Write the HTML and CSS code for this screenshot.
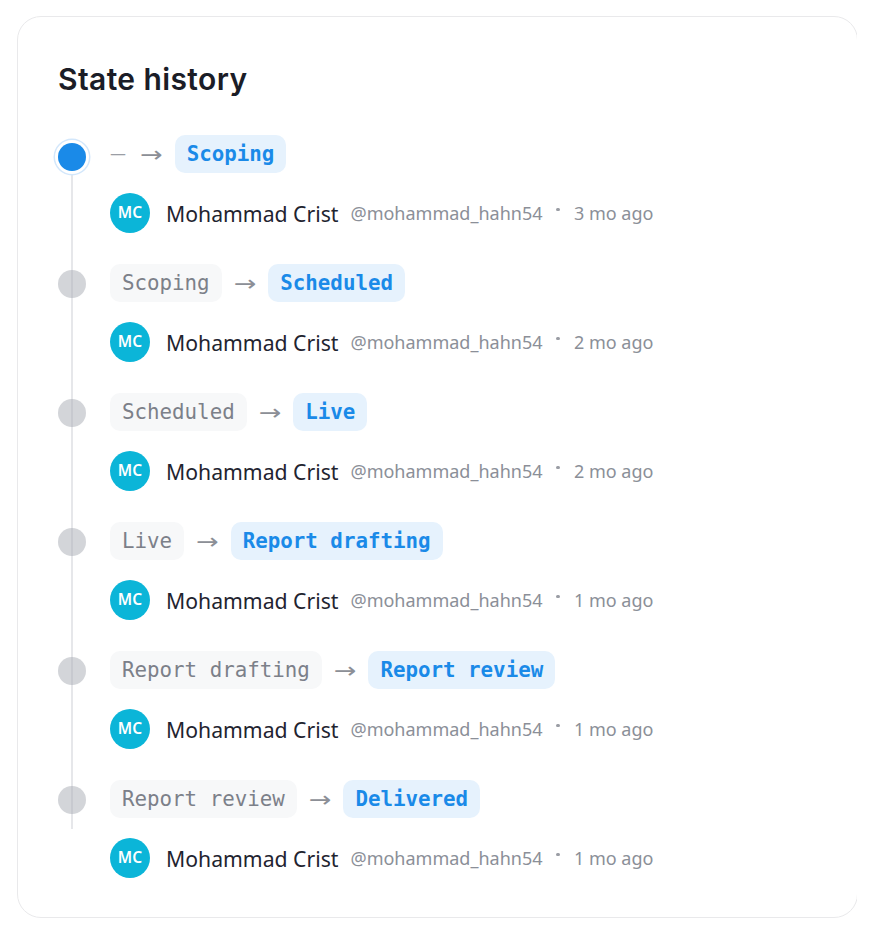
FILE: index.html
```html
<!DOCTYPE html>
<html lang="en">
<head>
<meta charset="utf-8">
<title>State history</title>
<link rel="stylesheet" href="styles.css">
</head>
<body>
<section class="card">
  <h2 class="title">State history</h2>
  <ol class="timeline">
    <li class="item">
      <span class="dot dot-current"></span>
      <div class="body">
        <div class="change">
          <span class="none">—</span>
          <span class="arrow">→</span>
          <span class="pill pill-new">Scoping</span>
        </div>
        <div class="meta">
          <span class="avatar">MC</span>
          <span class="name">Mohammad Crist</span>
          <span class="handle">@mohammad_hahn54</span>
          <span class="sep"></span>
          <span class="time">3 mo ago</span>
        </div>
      </div>
    </li>
    <li class="item">
      <span class="dot"></span>
      <div class="body">
        <div class="change">
          <span class="pill pill-old">Scoping</span>
          <span class="arrow">→</span>
          <span class="pill pill-new">Scheduled</span>
        </div>
        <div class="meta">
          <span class="avatar">MC</span>
          <span class="name">Mohammad Crist</span>
          <span class="handle">@mohammad_hahn54</span>
          <span class="sep"></span>
          <span class="time">2 mo ago</span>
        </div>
      </div>
    </li>
    <li class="item">
      <span class="dot"></span>
      <div class="body">
        <div class="change">
          <span class="pill pill-old">Scheduled</span>
          <span class="arrow">→</span>
          <span class="pill pill-new">Live</span>
        </div>
        <div class="meta">
          <span class="avatar">MC</span>
          <span class="name">Mohammad Crist</span>
          <span class="handle">@mohammad_hahn54</span>
          <span class="sep"></span>
          <span class="time">2 mo ago</span>
        </div>
      </div>
    </li>
    <li class="item">
      <span class="dot"></span>
      <div class="body">
        <div class="change">
          <span class="pill pill-old">Live</span>
          <span class="arrow">→</span>
          <span class="pill pill-new">Report drafting</span>
        </div>
        <div class="meta">
          <span class="avatar">MC</span>
          <span class="name">Mohammad Crist</span>
          <span class="handle">@mohammad_hahn54</span>
          <span class="sep"></span>
          <span class="time">1 mo ago</span>
        </div>
      </div>
    </li>
    <li class="item">
      <span class="dot"></span>
      <div class="body">
        <div class="change">
          <span class="pill pill-old">Report drafting</span>
          <span class="arrow">→</span>
          <span class="pill pill-new">Report review</span>
        </div>
        <div class="meta">
          <span class="avatar">MC</span>
          <span class="name">Mohammad Crist</span>
          <span class="handle">@mohammad_hahn54</span>
          <span class="sep"></span>
          <span class="time">1 mo ago</span>
        </div>
      </div>
    </li>
    <li class="item">
      <span class="dot"></span>
      <div class="body">
        <div class="change">
          <span class="pill pill-old">Report review</span>
          <span class="arrow">→</span>
          <span class="pill pill-new">Delivered</span>
        </div>
        <div class="meta">
          <span class="avatar">MC</span>
          <span class="name">Mohammad Crist</span>
          <span class="handle">@mohammad_hahn54</span>
          <span class="sep"></span>
          <span class="time">1 mo ago</span>
        </div>
      </div>
    </li>
  </ol>
</section>
</body>
</html>
```
FILE: styles.css
```css
* { box-sizing: border-box; }

html, body { background: #ffffff; }

body {
  margin: 16px 16px 16px 17px;
  font-family: "Noto Sans", "Open Sans", sans-serif;
  color: #1f2430;
}

.card {
  width: 841px;
  border: 1px solid #e9e9eb;
  border-radius: 24px;
  background: #ffffff;
  padding: 44px 40px 39px 40px;
}

.title {
  margin: 0;
  font-family: "Inter", "Lato", sans-serif;
  font-weight: 600;
  font-size: 30px;
  line-height: 36px;
  color: #1b1d27;
  letter-spacing: 0.4px;
}

.timeline {
  position: relative;
  list-style: none;
  margin: 38px 0 0 0;
  padding: 0;
  display: flex;
  flex-direction: column;
  gap: 31px;
}

.timeline::before {
  content: "";
  position: absolute;
  left: 13px;
  top: 22px;
  height: 672px;
  width: 2px;
  background: #e6e7ea;
}

.item {
  display: grid;
  grid-template-columns: 28px 1fr;
  column-gap: 24px;
  align-items: start;
}

.dot {
  position: relative;
  z-index: 1;
  width: 28px;
  height: 28px;
  margin-top: 6px;
  border-radius: 50%;
  background: rgba(168, 172, 180, 0.5);
}

.dot-current {
  margin-top: 8px;
  background: #1a8ae8;
  box-shadow: 0 0 0 3px #ffffff, 0 0 0 4.5px #d3e7fb;
}

.body {
  display: flex;
  flex-direction: column;
  gap: 20px;
}

.change {
  display: flex;
  align-items: center;
  gap: 12px;
  height: 38px;
}

.none {
  color: #9b9ea5;
  font-family: "DejaVu Sans", sans-serif;
  font-size: 16px;
  line-height: 1;
  margin-right: 2px;
}

.arrow {
  color: #8c8f96;
  font-size: 27px;
  line-height: 1;
  font-family: "DejaVu Sans", sans-serif;
  transform: scaleY(0.8);
}

.pill {
  display: inline-flex;
  align-items: center;
  height: 38px;
  padding: 0 12px;
  border-radius: 10px;
  font-family: "DejaVu Sans Mono", "Liberation Mono", monospace;
  font-size: 20.8px;
  white-space: pre;
}

.pill-old {
  background: #f7f8f9;
  color: #7c8089;
}

.pill-new {
  background: #e6f2fd;
  color: #1a8ae8;
  font-weight: 700;
}

.meta {
  display: flex;
  align-items: center;
  height: 40px;
}

.avatar {
  width: 40px;
  height: 40px;
  border-radius: 50%;
  background: #0bb5d8;
  color: #ffffff;
  font-size: 15.5px;
  font-weight: 600;
  display: flex;
  align-items: center;
  justify-content: center;
  padding-bottom: 2px;
  margin-right: 16px;
}

.name {
  font-size: 21.2px;
  color: #1f2430;
  margin-right: 12px;
}

.handle {
  font-size: 18px;
  color: #8b8f98;
  margin-right: 14px;
}

.sep {
  width: 3.5px;
  height: 3.5px;
  border-radius: 50%;
  background: #9a9da4;
  margin-bottom: 7px;
  margin-right: 14px;
}

.time {
  font-size: 18px;
  color: #8b8f98;
}
```
